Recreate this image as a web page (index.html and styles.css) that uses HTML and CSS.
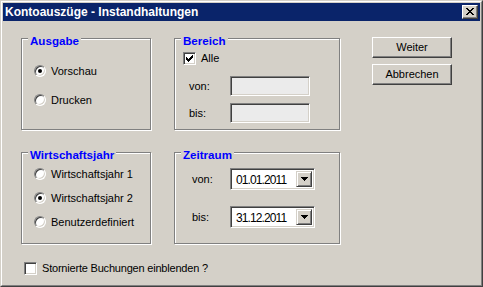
FILE: index.html
```html
<!DOCTYPE html>
<html>
<head>
<meta charset="utf-8">
<link rel="stylesheet" href="styles.css">
</head>
<body>
<div class="window">
  <div class="frame">
    <div class="titlebar">
      <span class="title">Kontoauszüge - Instandhaltungen</span>
      <span class="close"><svg width="8" height="7" viewBox="0 0 8 7" shape-rendering="crispEdges"><path fill="#000" d="M0 0h2v1H0z M6 0h2v1H6z M1 1h2v1H1z M5 1h2v1H5z M2 2h4v1H2z M3 3h2v1H3z M2 4h4v1H2z M1 5h2v1H1z M5 5h2v1H5z M0 6h2v1H0z M6 6h2v1H6z"/></svg></span>
    </div>
    <div class="client">
      <div class="main">
        <div class="groups">
          <div class="group g-ausgabe">
            <span class="legend">Ausgabe</span>
            <div class="opt"><span class="radio checked"></span><span>Vorschau</span></div>
            <div class="opt"><span class="radio"></span><span>Drucken</span></div>
          </div>
          <div class="group g-bereich">
            <span class="legend">Bereich</span>
            <div class="opt"><span class="check"><svg width="7" height="7" viewBox="0 0 7 7" shape-rendering="crispEdges"><path fill="#000" d="M0 2h1v3H0z M1 3h1v3H1z M2 4h1v3H2z M3 3h1v3H3z M4 2h1v3H4z M5 1h1v3H5z M6 0h1v3H6z"/></svg></span><span>Alle</span></div>
            <div class="field-row first"><span class="lbl">von:</span><span class="textbox"></span></div>
            <div class="field-row second"><span class="lbl">bis:</span><span class="textbox"></span></div>
          </div>
          <div class="group g-wj">
            <span class="legend">Wirtschaftsjahr</span>
            <div class="opt"><span class="radio"></span><span>Wirtschaftsjahr 1</span></div>
            <div class="opt"><span class="radio checked"></span><span>Wirtschaftsjahr 2</span></div>
            <div class="opt"><span class="radio"></span><span>Benutzerdefiniert</span></div>
          </div>
          <div class="group g-zeit">
            <span class="legend">Zeitraum</span>
            <div class="combo-row"><span class="lbl">von:</span><span class="combo"><span class="combo-text">01.01.2011</span><span class="drop"><svg width="7" height="4" viewBox="0 0 7 4" shape-rendering="crispEdges"><path fill="#000" d="M0 0h7v1H0z M1 1h5v1H1z M2 2h3v1H2z M3 3h1v1H3z"/></svg></span></span></div>
            <div class="combo-row"><span class="lbl">bis:</span><span class="combo"><span class="combo-text">31.12.2011</span><span class="drop"><svg width="7" height="4" viewBox="0 0 7 4" shape-rendering="crispEdges"><path fill="#000" d="M0 0h7v1H0z M1 1h5v1H1z M2 2h3v1H2z M3 3h1v1H3z"/></svg></span></span></div>
          </div>
        </div>
        <div class="buttons">
          <span class="btn">Weiter</span>
          <span class="btn">Abbrechen</span>
        </div>
      </div>
      <div class="opt storno"><span class="check"></span><span class="storno-text">Stornierte Buchungen einblenden ?</span></div>
    </div>
  </div>
</div>
</body>
</html>
```

FILE: styles.css
```css
body {
  margin: 0;
  background: #d4d0c8;
  font-family: "Liberation Sans", Arial, sans-serif;
  font-size: 11px;
  color: #000;
}

.window {
  width: 483px;
  height: 287px;
  box-sizing: border-box;
  border: 1px solid;
  border-color: #d4d0c8 #404040 #404040 #d4d0c8;
  background: #d4d0c8;
}

.frame {
  height: 100%;
  box-sizing: border-box;
  border: 1px solid;
  border-color: #ffffff #808080 #808080 #ffffff;
  padding: 1px;
  display: flex;
  flex-direction: column;
}

.titlebar {
  height: 18px;
  flex: none;
  background: #0a246a;
  display: flex;
  align-items: center;
  justify-content: space-between;
  padding: 0 2px 0 2px;
}

.title {
  color: #fff;
  font-weight: bold;
  font-size: 12px;
  line-height: 18px;
  white-space: nowrap;
}

.close {
  width: 16px;
  height: 14px;
  box-sizing: border-box;
  border: 1px solid;
  border-color: #ffffff #404040 #404040 #ffffff;
  box-shadow: inset -1px -1px #808080;
  background: #d4d0c8;
  display: flex;
  align-items: center;
  justify-content: center;
  padding-bottom: 1px;
}

.client {
  padding: 17px 0 0 18px;
}

.main {
  display: flex;
  align-items: flex-start;
}

.groups {
  display: grid;
  grid-template-columns: 130px 166px;
  grid-template-rows: 92px 92px;
  gap: 22px 23px;
}

.group {
  position: relative;
  border: 1px solid #808080;
  box-shadow: inset 1px 1px #ffffff, 1px 1px #ffffff;
  display: flex;
  flex-direction: column;
}

.legend {
  position: absolute;
  top: -5px;
  left: 6px;
  padding: 0 2px;
  background: #d4d0c8;
  color: #0000ff;
  font-weight: bold;
  font-size: 11.6px;
  line-height: 13px;
  white-space: nowrap;
}

.opt {
  display: flex;
  align-items: center;
  height: 16px;
  gap: 5px;
  white-space: nowrap;
}

.g-ausgabe {
  padding: 24px 0 0 12px;
  gap: 13px;
}

.g-wj {
  padding: 13px 0 0 12px;
  gap: 8px;
}

.g-bereich {
  padding: 11px 0 0 8px;
}

.g-zeit {
  padding: 15px 0 0 17px;
  gap: 16px;
}

.radio {
  width: 12px;
  height: 12px;
  flex: none;
  box-sizing: border-box;
  border-radius: 50%;
  border: 1px solid;
  border-color: #808080 #ffffff #ffffff #808080;
  box-shadow: inset 1px 1px #404040, inset -1px -1px #d4d0c8;
  background: #fff;
  display: flex;
  align-items: center;
  justify-content: center;
}

.radio.checked::after {
  content: "";
  width: 4px;
  height: 4px;
  border-radius: 50%;
  background: #000;
}

.check {
  width: 13px;
  height: 13px;
  flex: none;
  box-sizing: border-box;
  border: 1px solid;
  border-color: #808080 #ffffff #ffffff #808080;
  box-shadow: inset 1px 1px #404040, inset -1px -1px #d4d0c8;
  background: #fff;
  display: flex;
  align-items: center;
  justify-content: center;
}

.field-row {
  display: flex;
  align-items: center;
  height: 20px;
  padding-left: 6px;
}

.field-row.first {
  margin-top: 10px;
}

.field-row.second {
  margin-top: 7px;
}

.field-row .lbl {
  width: 41px;
}

.textbox {
  width: 80px;
  height: 20px;
  box-sizing: border-box;
  border: 1px solid;
  border-color: #808080 #ffffff #ffffff #808080;
  box-shadow: inset 1px 1px #404040, inset -1px -1px #d4d0c8;
  background: #ebebeb;
}

.combo-row {
  display: flex;
  align-items: center;
  height: 22px;
}

.combo-row .lbl {
  width: 38px;
}

.combo {
  width: 85px;
  height: 22px;
  box-sizing: border-box;
  border: 1px solid;
  border-color: #808080 #ffffff #ffffff #808080;
  box-shadow: inset 1px 1px #404040, inset -1px -1px #d4d0c8;
  background: #fff;
  padding: 2px;
  display: flex;
  align-items: stretch;
}

.combo-text {
  flex: 1;
  padding-left: 3px;
  font-size: 12px;
  letter-spacing: -0.9px;
  line-height: 18px;
}

.drop {
  width: 16px;
  box-sizing: border-box;
  border: 1px solid;
  border-color: #d4d0c8 #404040 #404040 #d4d0c8;
  box-shadow: inset 1px 1px #ffffff, inset -1px -1px #808080;
  background: #d4d0c8;
  display: flex;
  align-items: center;
  justify-content: center;
}

.buttons {
  margin-left: 32px;
  margin-top: -1px;
  display: flex;
  flex-direction: column;
  gap: 6px;
}

.btn {
  width: 80px;
  height: 21px;
  box-sizing: border-box;
  border: 1px solid;
  border-color: #ffffff #404040 #404040 #ffffff;
  box-shadow: inset -1px -1px #808080;
  background: #d4d0c8;
  display: flex;
  align-items: center;
  justify-content: center;
  padding-bottom: 1px;
}

.storno {
  margin-top: 16px;
  margin-left: 3px;
}

.storno-text {
  letter-spacing: -0.2px;
}
```
